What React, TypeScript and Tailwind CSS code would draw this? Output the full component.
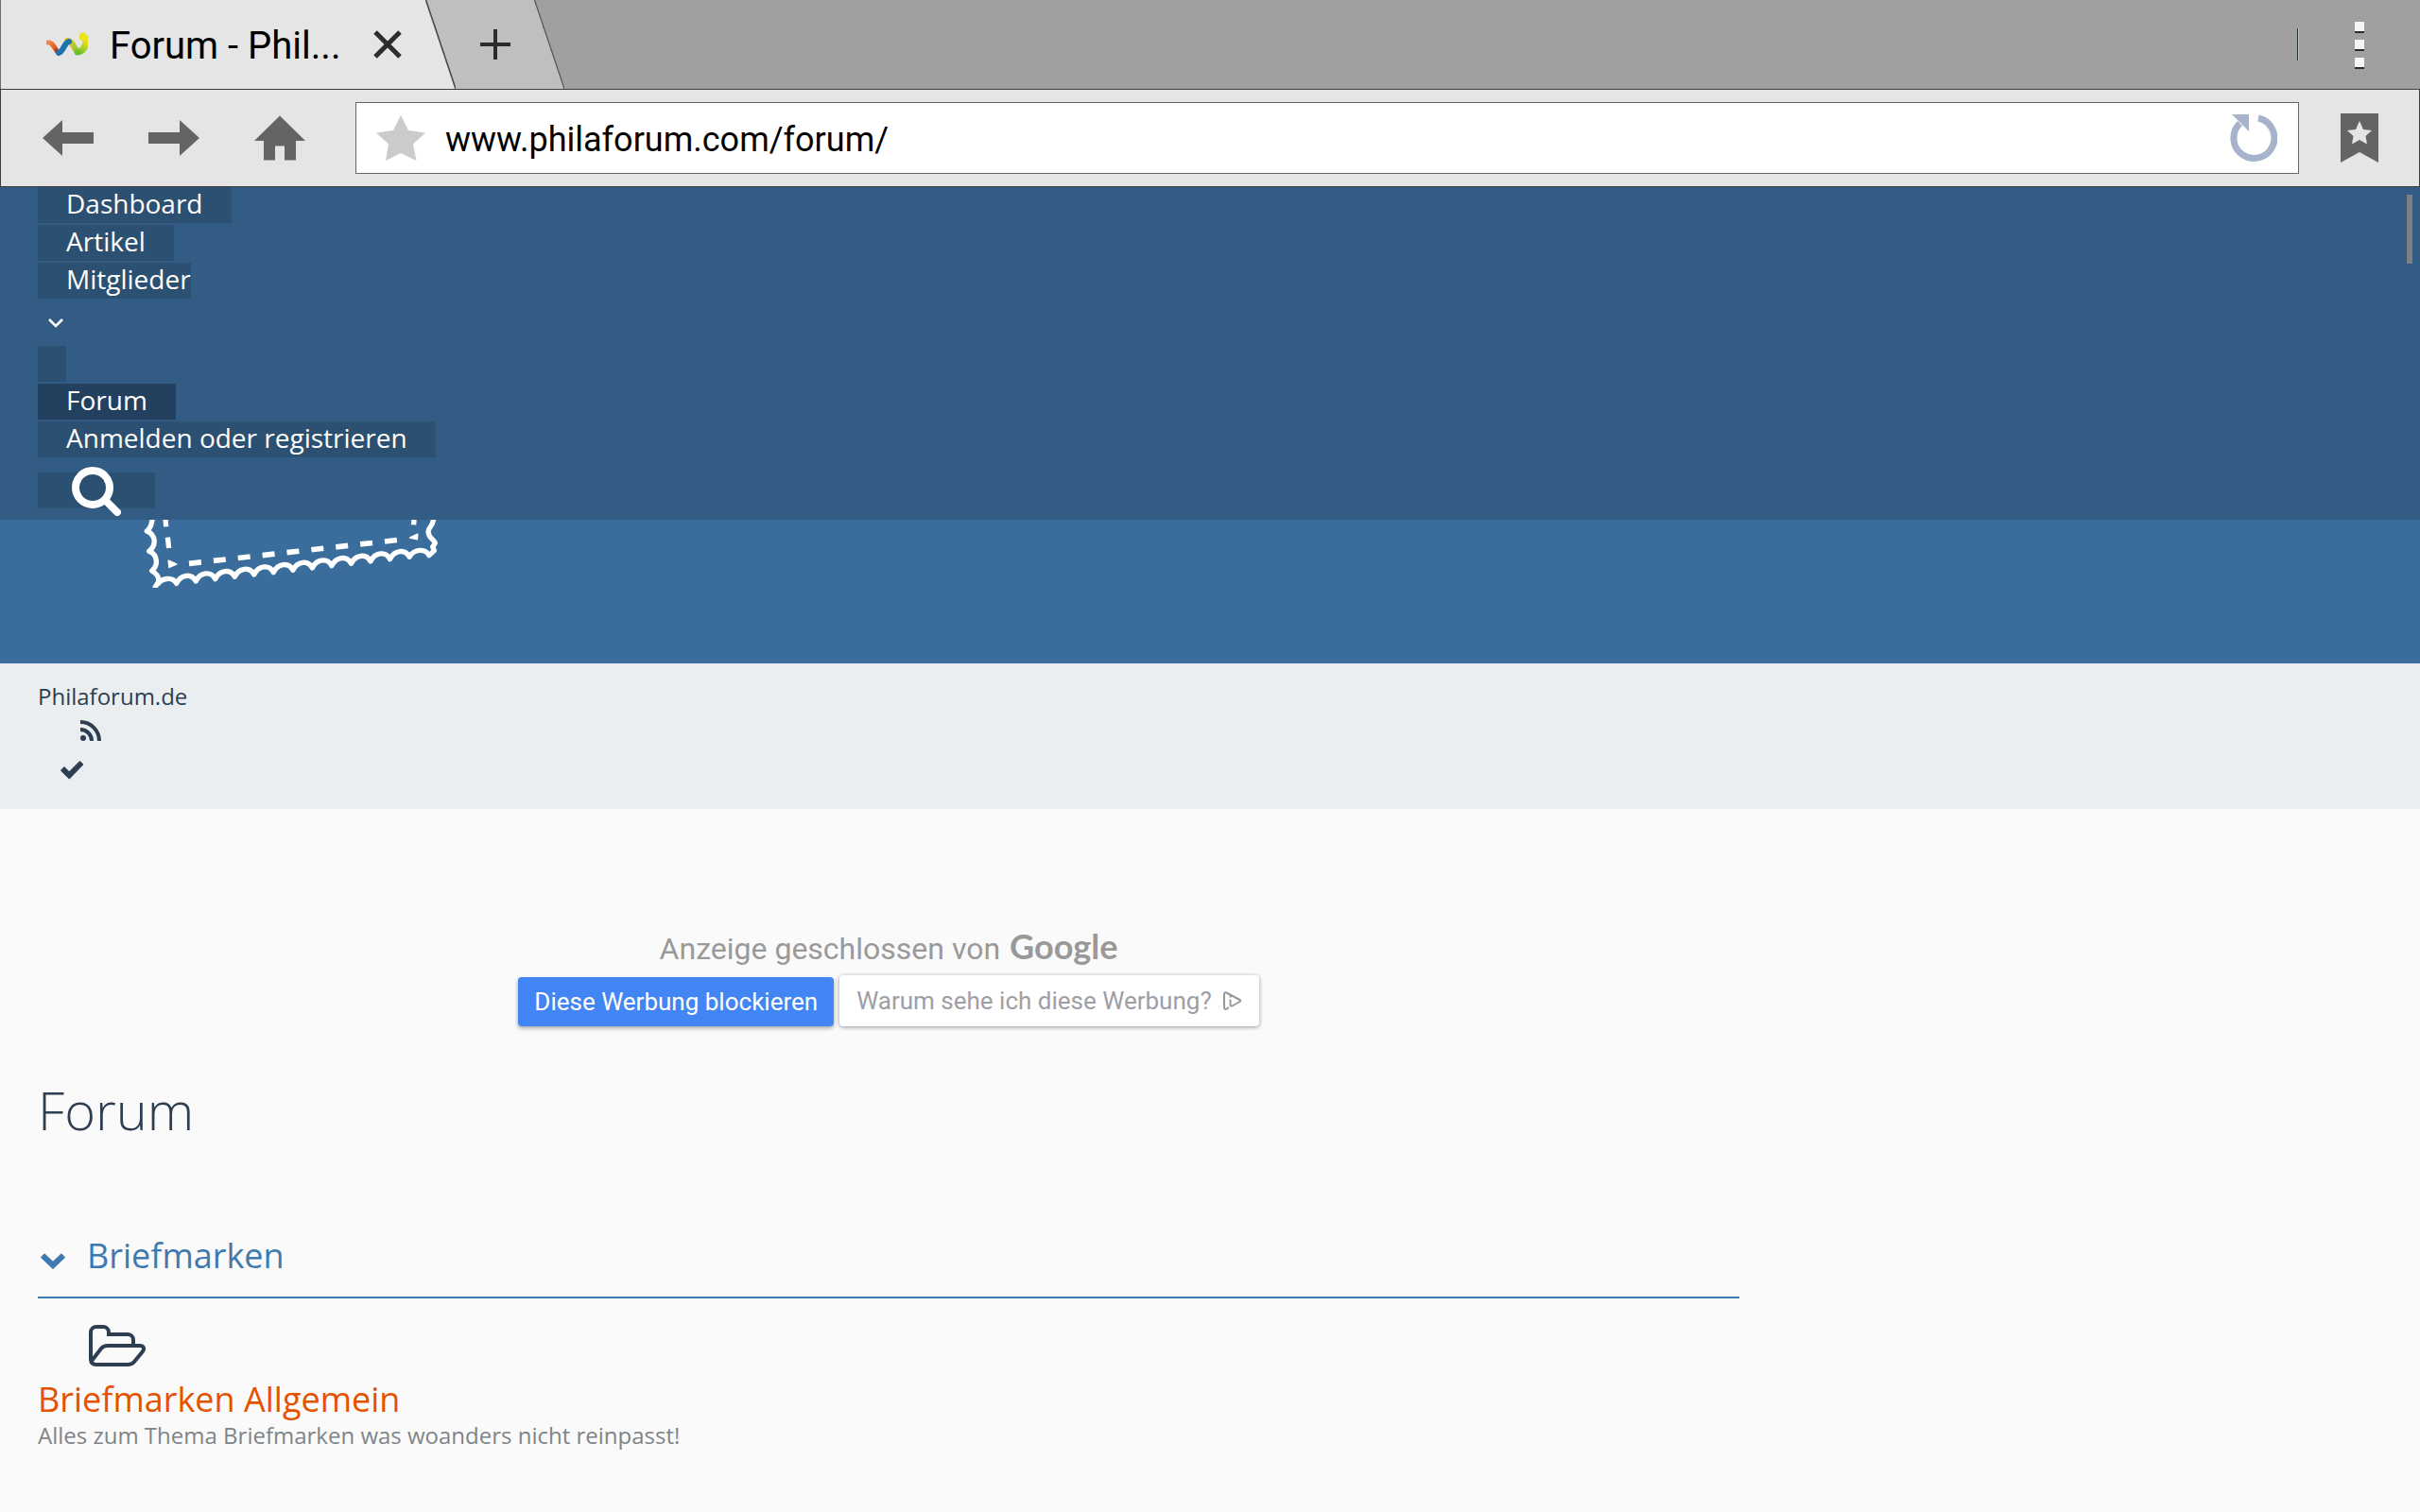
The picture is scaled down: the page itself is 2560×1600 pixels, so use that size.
import React from 'react';

interface NavItem {
  label: string;
  href: string;
  active?: boolean;
}

const MAIN_LINKS: NavItem[] = [
  { label: 'Dashboard', href: '#dashboard' },
  { label: 'Artikel', href: '#artikel' },
];

const SECOND_LINKS: NavItem[] = [
  { label: 'Forum', href: '#forum', active: true },
  { label: 'Anmelden oder registrieren', href: '#login' },
];

const WaveLogo = () => (
  <svg className="w-11 h-7 shrink-0" viewBox="0 0 44 28" fill="none" strokeLinecap="round" strokeLinejoin="round" aria-hidden="true">
    <defs>
      <linearGradient id="orange" x1="0" y1="0" x2="1" y2="1">
        <stop offset="0" stopColor="#f08a4a" />
        <stop offset="0.6" stopColor="#e0561c" />
        <stop offset="1" stopColor="#3a2a40" />
      </linearGradient>
      <linearGradient id="yellow" x1="0" y1="0" x2="1" y2="1">
        <stop offset="0" stopColor="#e3c52c" />
        <stop offset="1" stopColor="#8fc832" />
      </linearGradient>
      <linearGradient id="green" x1="0" y1="1" x2="0.4" y2="0">
        <stop offset="0" stopColor="#6cbf2a" />
        <stop offset="1" stopColor="#e6e01a" />
      </linearGradient>
    </defs>
    <path d="M2 12C7 11 9 20 13 23" stroke="url(#orange)" strokeWidth="5" />
    <path d="M22 10C27 9 29 18 33 22" stroke="url(#yellow)" strokeWidth="6" />
    <path d="M13 23C18 22 19 12 24 11" stroke="#1f73ad" strokeWidth="6" />
    <path d="M33 22C38 22 42 17 42 8" stroke="url(#green)" strokeWidth="7" />
    <circle cx="39" cy="6" r="4.5" fill="#ece31c" />
  </svg>
);

const StampEdge = () => (
  <svg className="w-[315px] h-[72px]" viewBox="450 210 945 216" fill="none" stroke="#fff" strokeWidth="16" strokeLinejoin="round" aria-hidden="true">
    {/* perforated outline */}
    <path d="M484 206C480 228 478 236 466 246C494 258 498 290 473 310C502 322 502 356 482 372C502 384 506 396 502 408L490 428" />
    <path d="M500 416C512 394 548 390 560 412c14-29 48-33 61.6-7c14-29 48-33 61.6-7c14-29 48-33 61.6-7c14-29 48-33 61.6-7c14-29 48-33 61.6-7c14-29 48-33 61.6-7c14-29 48-33 61.6-7c14-29 48-33 61.6-7c14-29 48-33 61.6-7c14-29 48-33 61.6-7c14-29 48-33 61.6-7c14-29 48-33 61.6-7C1314 302 1350 300 1362 323L1378 308L1373 296L1381 284C1376 270 1360 270 1359 248C1360 232 1374 232 1376 206" />
    {/* dashed inner frame */}
    <path d="M525 206L527 232M532 266L536 300M1314 206L1313 226" />
    <path d="M535 340L560 351L537 361ZM1301 267L1325 256L1324 272Z" fill="#fff" strokeWidth="5" />
    <path d="M600 349L1265 274" strokeWidth="17" strokeDasharray="39 39.1" />
  </svg>
);

const SearchIcon = () => (
  <svg className="w-13 h-13" viewBox="0 0 52 52" fill="none" stroke="#fff" strokeWidth="8" strokeLinecap="round" aria-hidden="true">
    <circle cx="22" cy="22" r="18" />
    <path d="M35 35L48 48" />
  </svg>
);

const BrowserTabs = () => (
  <div className="flex h-[94px] bg-[#a0a0a0]">
    <div className="flex w-[450px] items-center border-l border-[#6a6a6a] bg-[#e5e5e5] pl-12">
      <WaveLogo />
      <span className="ml-[23px] w-[252px] pt-[3px] text-[40px] leading-12 text-black">Forum - Phil...</span>
      <button type="button" aria-label="Tab schließen" className="ml-[27px]">
        <svg className="w-[30px] h-[30px]" viewBox="0 0 30 30" stroke="#2c2c2c" strokeWidth="5" aria-hidden="true">
          <path d="M2 2L28 28M28 2L2 28" />
        </svg>
      </button>
    </div>
    <svg className="h-full w-8 bg-[#bfbfbf]" viewBox="0 0 32 94" preserveAspectRatio="none" aria-hidden="true">
      <path d="M0 0L32 94H0Z" fill="#e5e5e5" />
      <path d="M0.5 0L32 94" stroke="#4a4a4a" strokeWidth="1.6" />
    </svg>
    <button type="button" aria-label="Neuer Tab" className="flex w-[83px] items-center justify-center bg-[#bfbfbf]">
      <svg className="w-8 h-8" viewBox="0 0 32 32" stroke="#2c2c2c" strokeWidth="4" aria-hidden="true">
        <path d="M16 0V32M0 16H32" />
      </svg>
    </button>
    <svg className="h-full w-8" viewBox="0 0 32 94" preserveAspectRatio="none" aria-hidden="true">
      <path d="M0 0L32 94H0Z" fill="#bfbfbf" />
      <path d="M0.5 0L32 94" stroke="#555" strokeWidth="1.2" />
    </svg>
    <div className="ml-auto flex items-center pr-[59px]">
      <div className="h-[34px] w-0.5 border-l border-[#1f2f33] bg-[#b9c6c8]"></div>
      <button type="button" aria-label="Menü" className="ml-[59px] flex flex-col gap-[7px] pt-0.5">
        <span className="h-3 w-2.5 border-b-2 border-[#2c2c2c] bg-[#f5f5f5]"></span>
        <span className="h-3 w-2.5 border-b-2 border-[#2c2c2c] bg-[#f5f5f5]"></span>
        <span className="h-3 w-2.5 border-b-2 border-[#2c2c2c] bg-[#f5f5f5]"></span>
      </button>
    </div>
  </div>
);

const Toolbar = () => (
  <div className="flex h-[104px] items-center border border-[#3c3c3c] bg-[#e5e5e5] pl-11 pr-[43px]">
    <button type="button" aria-label="Zurück">
      <svg className="w-[54px] h-[38px]" viewBox="0 0 54 38" fill="#646464" aria-hidden="true">
        <path d="M0 19L21 0V13H54V25H21V38Z" />
      </svg>
    </button>
    <button type="button" aria-label="Vor" className="ml-[58px]">
      <svg className="w-[54px] h-[38px]" viewBox="0 0 54 38" fill="#646464" aria-hidden="true">
        <path d="M54 19L33 0V13H0V25H33V38Z" />
      </svg>
    </button>
    <button type="button" aria-label="Startseite" className="ml-[58px]">
      <svg className="w-[54px] h-12" viewBox="0 0 54 48" fill="#646464" aria-hidden="true">
        <path d="M27 0.5L54 27H44V47.5H32V32.5H22V47.5H10V27H0Z" />
      </svg>
    </button>
    <form className="ml-[53px] flex h-[76px] flex-1 items-center border border-[#666] bg-white pl-[21px] pr-[22px]">
      <svg className="w-[52px] h-12" viewBox="0 0 52 48" fill="#cbcbcb" aria-hidden="true">
        <path d="M26 0L34 16L52 18.5L39 30.5L42.5 48L26 40L10 48L13 30.5L0 18.5L18 16Z" />
      </svg>
      <input
        type="text"
        aria-label="Adresse"
        defaultValue="www.philaforum.com/forum/"
        className="ml-[21px] flex-1 bg-transparent pt-[3px] text-[36px] leading-12 text-black outline-none"
      />
      <button type="button" aria-label="Neu laden">
        <svg className="w-[50px] h-[50px]" viewBox="0 0 50 50" fill="none" aria-hidden="true">
          <path d="M30 4A21.5 21.5 0 1 1 10.5 9.5" stroke="#a6b3ca" strokeWidth="7" />
          <path d="M2 0H20V18Z" fill="#a6b3ca" />
        </svg>
      </button>
    </form>
    <button type="button" aria-label="Lesezeichen" className="ml-11">
      <svg className="w-10 h-[52px]" viewBox="0 0 40 52" aria-hidden="true">
        <path d="M0 0H40V52L20 41L0 52Z" fill="#646464" />
        <path d="M20 8L24 17L33 18L26.5 24L28 32.5L20 28L12 32.5L13.5 24L7 18L16 17Z" fill="#e5e5e5" />
      </svg>
    </button>
  </div>
);

const NavLink: React.FC<{ item: NavItem }> = ({ item }) => (
  <li className="flex h-10 items-start">
    <a
      href={item.href}
      className={`block px-[30px] pb-1 text-[28px] leading-[34px] text-white ${item.active ? 'bg-[#24405f]' : 'bg-[#2c5071]'}`}
    >
      {item.label}
    </a>
  </li>
);

const SiteHeader = () => (
  <header className="h-[504px] bg-[#3a6d9c]">
    <nav className="relative bg-[#325c84] px-10">
      <ul>
        {MAIN_LINKS.map((item) => <NavLink key={item.label} item={item} />)}
        <li>
          <div className="flex h-10 items-start">
            <a href="#mitglieder" className="block bg-[#2c5071] pb-1 pl-[30px] text-[28px] leading-[34px] text-white">Mitglieder</a>
          </div>
          <button type="button" aria-label="Untermenü" className="flex h-12 items-center pl-[11px]">
            <svg className="w-4 h-[10px]" viewBox="0 0 16 10" fill="none" stroke="#fff" strokeWidth="2.6" aria-hidden="true">
              <path d="M1 1L8 8L15 1" />
            </svg>
          </button>
        </li>
        <li className="h-10">
          <div className="h-[38px] w-[30px] bg-[#2c5071]"></div>
        </li>
        {SECOND_LINKS.map((item) => <NavLink key={item.label} item={item} />)}
        <li className="h-16 pt-3.5">
          <button type="button" aria-label="Suche" className="flex h-[38px] w-[124px] items-center bg-[#2c5071] pl-9 pt-0.5">
            <SearchIcon />
          </button>
        </li>
      </ul>
      <div className="absolute right-2 top-2 h-[73px] w-1.5 bg-[#808080]"></div>
    </nav>
    <a href="#home" aria-label="Philaforum" className="ml-[150px] block w-[315px]">
      <StampEdge />
    </a>
  </header>
);

const Breadcrumbs = () => (
  <div className="h-[154px] bg-[#ebeef1] px-10 pt-[19px] text-[#2c3e50]">
    <a href="#home" className="block text-2xl leading-8">Philaforum.de</a>
    <a href="#feed" aria-label="RSS-Feed" className="mt-[9px] block pl-[45px]">
      <svg className="w-[22px] h-[22px]" viewBox="0 0 22 22" fill="none" stroke="currentColor" strokeWidth="4" aria-hidden="true">
        <circle cx="3" cy="19" r="3" fill="currentColor" stroke="none" />
        <path d="M0 10A12 12 0 0 1 12 22M0 2A20 20 0 0 1 20 22" />
      </svg>
    </a>
    <a href="#read" aria-label="Alle Foren als gelesen markieren" className="mt-[21px] block pl-6">
      <svg className="w-6 h-5" viewBox="0 0 24 20" fill="currentColor" aria-hidden="true">
        <path d="M0.3 9.8L3.5 6.5Q4 6.2 4.5 6.5L9.2 11.2L20 0.6Q20.5 0.2 21 0.6L24 3.6Q24.3 4 24 4.5L10 19Q9.3 19.5 8.6 19L0.3 10.7Q0 10.2 0.3 9.8Z" />
      </svg>
    </a>
  </div>
);

const ClosedAd = () => (
  <section className="flex flex-col items-center font-[Roboto,sans-serif]">
    <p className="flex items-baseline gap-2.5 text-[32px] leading-10 text-[#999]">
      Anzeige geschlossen von
      <span className="font-[Lato,sans-serif] text-[36px] font-bold">Google</span>
    </p>
    <div className="mt-2 flex items-end gap-1.5 text-[26px] leading-9">
      <button type="button" className="rounded-sm bg-[#4285f4] px-[17px] py-2 text-white shadow-[0_2px_4px_rgba(0,0,0,0.35)]">
        Diese Werbung blockieren
      </button>
      <button type="button" className="flex h-[54px] items-center rounded-sm bg-white px-[18px] text-[#9e9ea6] shadow-[0_1px_4px_rgba(0,0,0,0.4)]">
        Warum sehe ich diese Werbung?
        <svg className="ml-3 h-5 w-5" viewBox="0 0 20 20" fill="none" stroke="#999" strokeWidth="2" strokeLinejoin="round" aria-hidden="true">
          <path d="M6 17L3 19Q1 19 1 17V3Q1 0.5 3.5 1.5L17.5 9Q19 10 17.5 11L9.5 15.5Q7.5 16 7.5 14V8.5M7.5 4.5V6.5" />
        </svg>
      </button>
    </div>
  </section>
);

const App: React.FC = () => (
  <div className="flex h-screen flex-col overflow-hidden bg-[#fafafa] font-['Open_Sans',sans-serif]">
    <div className="font-[Roboto,sans-serif]">
      <BrowserTabs />
      <Toolbar />
    </div>
    <SiteHeader />
    <Breadcrumbs />
    <main className="max-w-[1880px] px-10 pt-[125px]">
      <ClosedAd />
      <h1 className="mt-12 text-[56px] font-light leading-20 text-[#2c3e50]">Forum</h1>
      <section>
        <h2 className="mt-[91px] flex items-center border-b-2 border-[#4078b0] pb-[19px] text-4xl leading-12 text-[#4078b0]">
          <button type="button" aria-label="Briefmarken einklappen" className="pl-[3px] pt-2.5">
            <svg className="w-[26px] h-[17px]" viewBox="0 0 26 17" fill="none" stroke="currentColor" strokeWidth="6" aria-hidden="true">
              <path d="M2 2.5L13 13L24 2.5" />
            </svg>
          </button>
          <a href="#briefmarken" className="ml-[23px]">Briefmarken</a>
        </h2>
        <article className="pt-7">
          <svg className="ml-[54px] w-[60px] h-11" viewBox="0 0 60 44" fill="none" stroke="#2c3e50" strokeWidth="4" aria-hidden="true">
            <path d="M2 37V8A6 6 0 0 1 8 2H15A6 6 0 0 1 21 8V10H41A6 6 0 0 1 47 16V21" />
            <path d="M3 38L13 25Q15.5 22 20 22H54C58 22 59 25 57 28L48 39Q45.5 42 41 42H8Q2 42 2 36" />
          </svg>
          <h3 className="mt-[13px] text-4xl leading-11 text-[#e65100]">
            <a href="#briefmarken-allgemein">Briefmarken Allgemein</a>
          </h3>
          <p className="text-2xl leading-8 text-[#7f8488]">Alles zum Thema Briefmarken was woanders nicht reinpasst!</p>
        </article>
      </section>
    </main>
  </div>
);

export default App;
